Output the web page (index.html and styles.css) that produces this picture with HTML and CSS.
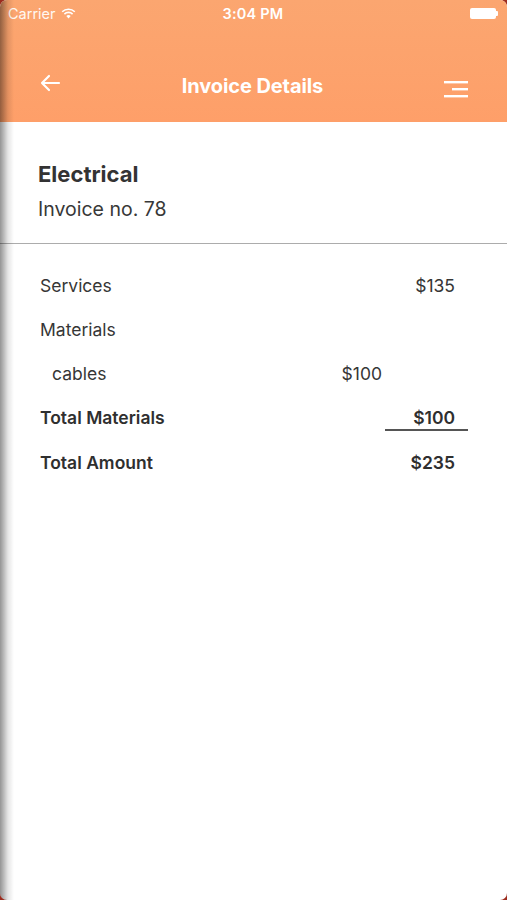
FILE: index.html
```html
<!doctype html>
<html>

<head>
  <meta charset='utf-8'>
  <title>Invoice Details</title>
  <link rel="stylesheet" href="styles.css">
</head>

<body>
  <div class='screen'>
    <div class='header'>
      <div class='statusbar'>
        <div class='carrier'>
          Carrier
          <svg class='wifi' width='15' height='11' viewBox='0 0 15 11'>
            <path d='M7.5 10.5 L5.3 8.1 A3.2 3.2 0 0 1 9.7 8.1 Z' fill='#fff'/>
            <path d='M3.4 6.1 A5.8 5.8 0 0 1 11.6 6.1' stroke='#fff' stroke-width='1.6' fill='none'/>
            <path d='M1.2 3.8 A9 9 0 0 1 13.8 3.8' stroke='#fff' stroke-width='1.6' fill='none'/>
          </svg>
        </div>
        <div class='clock'>3:04 PM</div>
        <div class='battery'>
          <div class='cell'></div>
          <div class='tip'></div>
        </div>
      </div>
      <div class='navbar'>
        <svg class='back' width='22' height='18' viewBox='0 0 22 18'>
          <path d='M20 9 H3 M10 2 L3 9 L10 16' stroke='#fff' stroke-width='2.2' fill='none' stroke-linecap='round' stroke-linejoin='round'/>
        </svg>
        <div class='title'>Invoice Details</div>
        <svg class='menu' width='26' height='18' viewBox='0 0 26 18'>
          <rect x='0' y='1' width='24' height='2.4' fill='#fff'/>
          <rect x='8' y='8' width='16' height='2.4' fill='#fff'/>
          <rect x='0' y='15' width='24' height='2.4' fill='#fff'/>
        </svg>
      </div>
    </div>

    <div class='summary'>
      <div class='category'>Electrical</div>
      <div class='number'>Invoice no. 78</div>
    </div>

    <div class='lines'>
      <div class='row'>
        <div class='label'>Services</div>
        <div class='sub'></div>
        <div class='amount'>$135</div>
      </div>
      <div class='row'>
        <div class='label'>Materials</div>
        <div class='sub'></div>
        <div class='amount'></div>
      </div>
      <div class='row'>
        <div class='label item'>cables</div>
        <div class='sub'>$100</div>
        <div class='amount'></div>
      </div>
      <div class='row bold'>
        <div class='label'>Total Materials</div>
        <div class='sub'></div>
        <div class='amount underline'>$100</div>
      </div>
      <div class='row bold'>
        <div class='label'>Total Amount</div>
        <div class='sub'></div>
        <div class='amount'>$235</div>
      </div>
    </div>
    <div class='shade'></div>
  </div>
</body>

</html>
```

FILE: styles.css
```css
* {
  margin: 0;
  padding: 0;
  box-sizing: border-box;
}
body {
  width: 507px;
  height: 900px;
  background: #9c2c1e;
  font-family: Inter, "Liberation Sans", sans-serif;
  color: #363636;
}
.screen {
  position: relative;
  width: 507px;
  height: 900px;
  background: #fff;
  border-radius: 7px;
  overflow: hidden;
}
.shade {
  position: absolute;
  top: 0;
  left: 0;
  width: 14px;
  height: 900px;
  background: linear-gradient(to right, rgba(0, 0, 0, 0.42) 0, rgba(0, 0, 0, 0.3) 3px, rgba(0, 0, 0, 0.1) 8px, rgba(0, 0, 0, 0) 14px);
}
.header {
  height: 122px;
  background: linear-gradient(to bottom, #fba670, #fe9f69);
  color: #fff;
}
.statusbar {
  display: flex;
  justify-content: space-between;
  align-items: center;
  height: 27px;
  padding: 0 9px 0 8px;
  font-size: 14.5px;
}
.carrier {
  display: flex;
  align-items: center;
  gap: 5px;
  width: 120px;
  color: #fff8f2;
}
.clock {
  font-weight: 600;
  letter-spacing: 0.2px;
}
.battery {
  display: flex;
  align-items: center;
  justify-content: flex-end;
  width: 120px;
}
.cell {
  width: 26px;
  height: 11px;
  border-radius: 2px;
  background: #fff;
}
.tip {
  width: 2px;
  height: 5px;
  background: #fff;
  border-radius: 0 1px 1px 0;
}
.navbar {
  display: flex;
  align-items: center;
  justify-content: space-between;
  height: 95px;
  padding: 21px 37px 0 39px;
}
.back {
  margin-top: -4px;
}
.title {
  font-size: 20px;
  font-weight: 700;
  letter-spacing: -0.1px;
  margin-top: 2px;
}
.menu {
  margin-top: 8px;
}
.summary {
  padding: 36px 38px 18px;
  border-bottom: 1px solid #acacac;
}
.category {
  font-size: 22px;
  font-weight: 700;
  line-height: 32px;
  color: #333;
}
.number {
  font-size: 19.5px;
  line-height: 32px;
  margin-top: 3px;
  color: #383838;
}
.lines {
  padding: 19px 39px 0 40px;
}
.row {
  display: grid;
  grid-template-columns: 1fr 92px 83px;
  height: 44.25px;
  align-items: center;
  font-size: 17.5px;
}
.bold {
  font-weight: 600;
  color: #2f2f2f;
}
.item {
  padding-left: 12px;
}
.sub {
  text-align: right;
  padding-right: 3px;
}
.amount {
  text-align: right;
  padding-right: 13px;
}
.underline {
  position: relative;
}
.underline::after {
  content: '';
  position: absolute;
  left: 0;
  right: 0;
  bottom: -3px;
  height: 2px;
  background: #555;
}
```
